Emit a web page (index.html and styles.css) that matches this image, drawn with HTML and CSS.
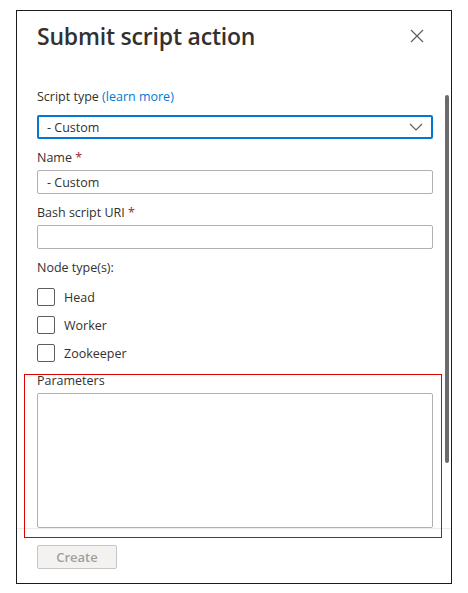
FILE: index.html
```html
<!DOCTYPE html>
<html>
<head>
<meta charset="utf-8">
<link rel="stylesheet" href="styles.css">
</head>
<body>
<div class="panel">
  <div class="header">
    <h1 class="title">Submit script action</h1>
    <button class="close" aria-label="Close">
      <svg width="14" height="14" viewBox="0 0 14 14"><path d="M1 1L13 13M13 1L1 13" stroke="#605e5c" stroke-width="1.2" fill="none"/></svg>
    </button>
  </div>
  <div class="body">
    <div class="content">
      <div class="field">
        <div class="label">Script type <a class="link">(learn more)</a></div>
        <div class="select">
          <span>- Custom</span>
          <svg class="chev" width="14" height="8" viewBox="0 0 14 8"><path d="M1 1L7 7L13 1" stroke="#605e5c" stroke-width="1.2" fill="none"/></svg>
        </div>
      </div>
      <div class="field">
        <div class="label">Name <span class="req">*</span></div>
        <div class="input"><span>- Custom</span></div>
      </div>
      <div class="field">
        <div class="label">Bash script URI <span class="req">*</span></div>
        <div class="input"></div>
      </div>
      <div class="field">
        <div class="label">Node type(s):</div>
        <div class="checks">
          <label class="check"><span class="box"></span><span>Head</span></label>
          <label class="check"><span class="box"></span><span>Worker</span></label>
          <label class="check"><span class="box"></span><span>Zookeeper</span></label>
        </div>
      </div>
      <div class="field params">
        <div class="label">Parameters</div>
        <div class="textarea"></div>
        <div class="highlight"></div>
      </div>
    </div>
    <div class="scrollbar"></div>
  </div>
  <div class="footer">
    <button class="btn" disabled>Create</button>
  </div>
</div>
</body>
</html>
```
FILE: styles.css
```css
* { box-sizing: border-box; }
html, body { margin: 0; padding: 0; background: #fff; }
body {
  font-family: "Open Sans", "Noto Sans", "Liberation Sans", sans-serif;
  color: #323130;
}
.panel {
  margin: 10px 0 0 16px;
  width: 436px;
  height: 574px;
  border: 1px solid #1b1b1b;
  display: flex;
  flex-direction: column;
  position: relative;
}
.header {
  display: flex;
  align-items: center;
  justify-content: space-between;
  padding: 0 27px 0 20px;
  flex: 0 0 50px;
}
.title {
  margin: 0;
  font-size: 23px;
  font-weight: 600;
  line-height: 32px;
  color: #323130;
  letter-spacing: -0.2px;
}
.close {
  border: 0;
  background: none;
  padding: 0;
  width: 14px;
  height: 14px;
  display: flex;
}
.body {
  position: relative;
  flex: 1;
  border-bottom: 1px solid #edebe9;
}
.content {
  padding: 26px 18px 0 20px;
  display: flex;
  flex-direction: column;
  gap: 9px;
}
.field { display: flex; flex-direction: column; gap: 2px; position: relative; }
.label {
  font-size: 12.5px;
  line-height: 20px;
  color: #323130;
}
.link { color: #0078d4; }
.req { color: #a4262c; }
.select {
  height: 24px;
  border: 2px solid #0078d4;
  border-radius: 2px;
  display: flex;
  align-items: center;
  justify-content: space-between;
  padding: 0 8px 0 8px;
  font-size: 12.5px;
  margin-top: 6px;
}
.input {
  height: 24px;
  border: 1px solid #b3b0ad;
  border-radius: 2px;
  display: flex;
  align-items: center;
  padding: 0 9px;
  font-size: 12.5px;
}
.checks {
  display: flex;
  flex-direction: column;
  gap: 10px;
  margin-top: 8px;
}
.check {
  display: flex;
  align-items: center;
  gap: 9px;
  font-size: 12.5px;
  height: 18px;
}
.box {
  width: 18px;
  height: 18px;
  border: 1px solid #605e5c;
  border-radius: 2px;
}
.textarea {
  height: 135px;
  border: 1px solid #b3b0ad;
  border-radius: 2px;
}
.highlight {
  position: absolute;
  left: -13px;
  right: -9px;
  top: 3px;
  height: 164px;
  border: 1px solid #e00000;
}
.scrollbar {
  position: absolute;
  right: 2px;
  top: 34px;
  width: 4px;
  height: 368px;
  background: #6b6b6b;
  border-radius: 2px;
}
.footer {
  padding: 16px 20px;
  flex: 0 0 56px;
}
.btn {
  width: 80px;
  height: 24px;
  background: #f3f2f1;
  border: 1px solid #c8c6c4;
  border-radius: 2px;
  color: #a19f9d;
  font-family: inherit;
  font-size: 13px;
  font-weight: 600;
  padding: 0;
}
```
